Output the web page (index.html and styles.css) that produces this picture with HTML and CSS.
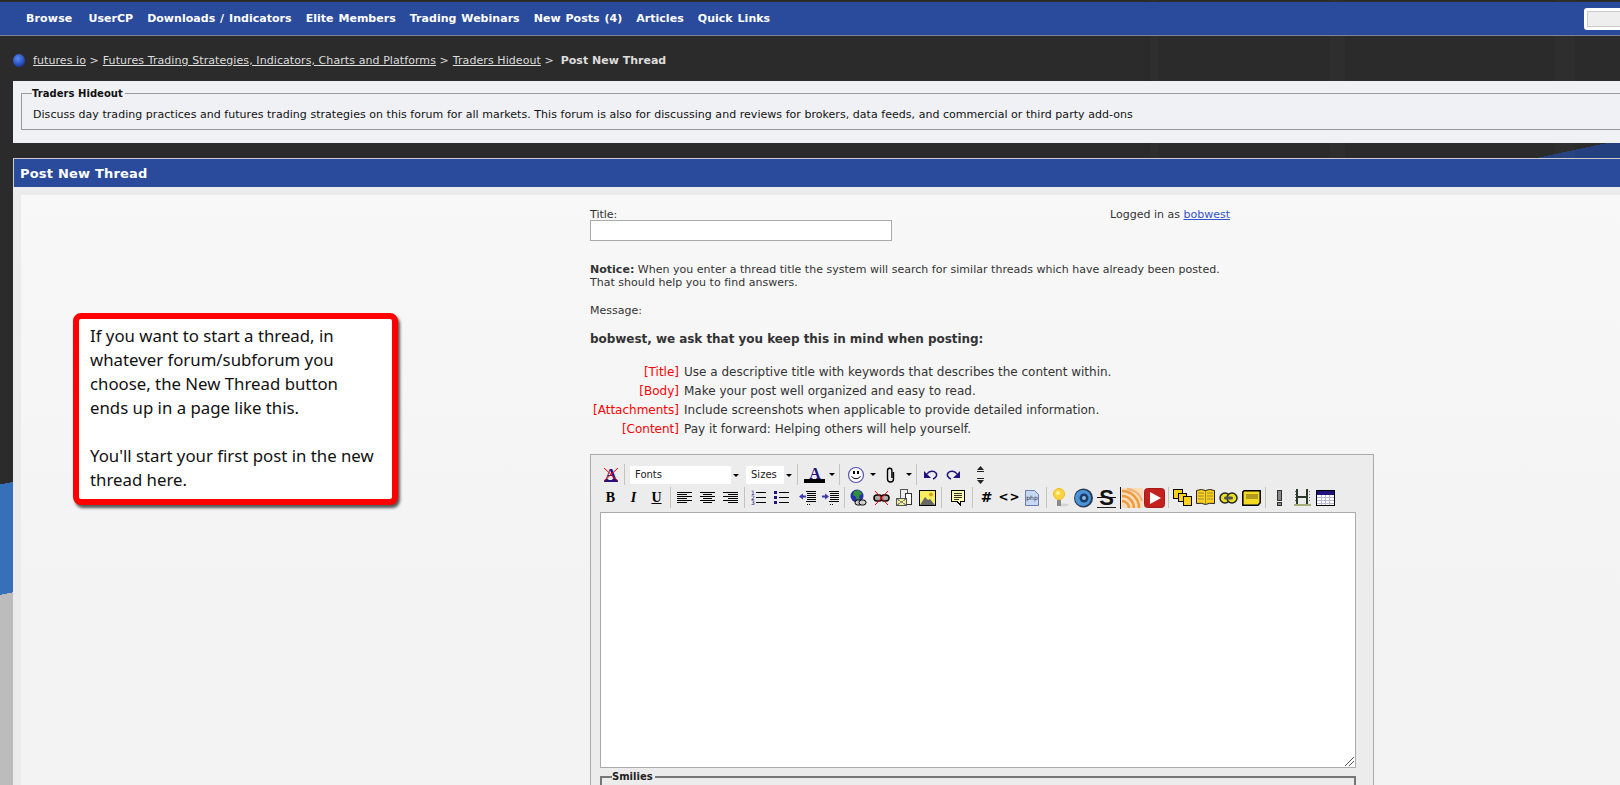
FILE: index.html
```html
<!DOCTYPE html>
<html>
<head>
  <meta charset="UTF-8">
  <title>Post New Thread</title>
  <link rel="stylesheet" href="styles.css">
</head>
<body>
  <div class="page">
    <nav class="top-nav">
      <a>Browse</a>
      <a>UserCP</a>
      <a>Downloads / Indicators</a>
      <a>Elite Members</a>
      <a>Trading Webinars</a>
      <a>New Posts (4)</a>
      <a>Articles</a>
      <a>Quick Links</a>
      <div class="search-box"><div class="search-field"></div></div>
    </nav>

    <div class="breadcrumb">
      <span class="globe-dot"></span>
      <a>futures io</a> <span class="crumb-sep">&gt;</span>
      <a>Futures Trading Strategies, Indicators, Charts and Platforms</a> <span class="crumb-sep">&gt;</span>
      <a>Traders Hideout</a> <span class="crumb-sep">&gt;</span>
      <strong>Post New Thread</strong>
    </div>

    <div class="forum-box">
      <fieldset class="forum-info">
        <legend>Traders Hideout</legend>
        <div>Discuss day trading practices and futures trading strategies on this forum for all markets. This forum is also for discussing and reviews for brokers, data feeds, and commercial or third party add-ons</div>
      </fieldset>
    </div>

    <div class="section-head">Post New Thread</div>

    <div class="section-body">
      <div class="section-inner">
        <div class="form-col">
          <div class="title-row">
            <div>
              <div>Title:</div>
              <div class="title-input"></div>
            </div>
            <div class="logged-in">Logged in as <a>bobwest</a></div>
          </div>

          <p class="notice"><b>Notice:</b> When you enter a thread title the system will search for similar threads which have already been posted.<br>That should help you to find answers.</p>
          <div class="message-label">Message:</div>
          <div class="keep-mind">bobwest, we ask that you keep this in mind when posting:</div>

          <div class="rules">
            <span class="rule-tag">[Title]</span><span>Use a descriptive title with keywords that describes the content within.</span>
            <span class="rule-tag">[Body]</span><span>Make your post well organized and easy to read.</span>
            <span class="rule-tag">[Attachments]</span><span>Include screenshots when applicable to provide detailed information.</span>
            <span class="rule-tag">[Content]</span><span>Pay it forward: Helping others will help yourself.</span>
          </div>

          <div class="editor">
            <!-- toolbar row 1 -->
            <div class="tb-row">
              <span class="tb-btn">
                <svg width="20" height="20" viewBox="0 0 20 20">
                  <text x="10" y="15" class="svg-serif" font-size="17" fill="#22127e" text-anchor="middle">A</text>
                  <rect x="3" y="15" width="14" height="2" fill="#22127e"/>
                  <path d="M3 3l14 13M17 3L3 16" stroke="#f00" fill="none"/>
                </svg>
              </span>
              <span class="tb-sep"></span>
              <div class="tb-select tb-fonts"><span>Fonts</span><i class="tb-select-arrow"></i></div>
              <div class="tb-select tb-sizes"><span>Sizes</span><i class="tb-select-arrow"></i></div>
              <span class="tb-sep"></span>
              <span class="tb-btn tb-color">
                <svg width="22" height="20" viewBox="0 0 22 20">
                  <text x="11" y="14" class="svg-serif" font-size="16" fill="#22127e" text-anchor="middle">A</text>
                  <rect x="0" y="14" width="21" height="4" fill="#000"/>
                </svg>
              </span>
              <i class="tb-arrow"></i>
              <span class="tb-sep"></span>
              <span class="tb-btn tb-smile">
                <svg width="18" height="18" viewBox="0 0 18 18">
                  <circle cx="9" cy="9" r="7.500" fill="#fff" stroke="#5a50b0" stroke-width="1.200"/>
                  <rect x="6" y="5" width="2" height="3" fill="#000"/>
                  <rect x="10" y="5" width="2" height="3" fill="#000"/>
                  <path d="M4.500 10.500q4.500 4.500 9 0" fill="none" stroke="#000"/>
                </svg>
              </span>
              <i class="tb-arrow"></i>
              <span class="tb-btn tb-clip">
                <svg width="11" height="16" viewBox="0 0 11 16">
                  <path d="M8.500 5v7a3 3 0 0 1-6 0V3.500a2.200 2.200 0 0 1 4.400 0V11" fill="none" stroke="#000" stroke-width="1.400"/>
                </svg>
              </span>
              <i class="tb-arrow"></i>
              <span class="tb-sep"></span>
              <span class="tb-btn">
                <svg width="15" height="12" viewBox="0 0 15 12">
                  <path d="M4 5C6 1.500 11 1.500 13 4 14.500 6 13 9 10 10" fill="none" stroke="#22127e" stroke-width="1.500"/>
                  <path d="M1 2v7h7z" fill="#22127e"/>
                </svg>
              </span>
              <span class="tb-btn">
                <svg width="15" height="12" viewBox="0 0 15 12">
                  <path d="M11 5C9 1.500 4 1.500 2 4 .5 6 2 9 5 10" fill="none" stroke="#22127e" stroke-width="1.500"/>
                  <path d="M14 2v7H7z" fill="#22127e"/>
                </svg>
              </span>
              <span class="tb-sizer">
                <svg width="7" height="18" viewBox="0 0 7 18">
                  <path d="M3.500 0L7 4H0z" fill="#222"/><rect x="0" y="5" width="7" height="1" fill="#222"/>
                  <rect x="0" y="12" width="7" height="1" fill="#222"/><path d="M3.500 18L7 14H0z" fill="#222"/>
                </svg>
              </span>
            </div>

            <!-- toolbar row 2 -->
            <div class="tb-row">
              <span class="tb-btn tb-letter"><b>B</b></span>
              <span class="tb-btn tb-letter"><b><i>I</i></b></span>
              <span class="tb-btn tb-letter tb-under"><b>U</b></span>
              <span class="tb-sep"></span>
              <span class="tb-btn">
                <svg width="15" height="12" viewBox="0 0 15 12" shape-rendering="crispEdges"><path d="M0 .5h15M0 2.500h10M0 4.500h15M0 6.500h10M0 8.500h15M0 10.500h10" stroke="#000"/></svg>
              </span>
              <span class="tb-btn">
                <svg width="15" height="12" viewBox="0 0 15 12" shape-rendering="crispEdges"><path d="M0 .5h15M3 2.500h9M0 4.500h15M3 6.500h9M0 8.500h15M3 10.500h9" stroke="#000"/></svg>
              </span>
              <span class="tb-btn">
                <svg width="15" height="12" viewBox="0 0 15 12" shape-rendering="crispEdges"><path d="M0 .5h15M5 2.500h10M0 4.500h15M5 6.500h10M0 8.500h15M5 10.500h10" stroke="#000"/></svg>
              </span>
              <span class="tb-sep"></span>
              <span class="tb-btn">
                <svg width="15" height="18" viewBox="0 0 15 18">
                  <text x="0" y="6" class="svg-tiny" fill="#22127e">1</text>
                  <text x="0" y="11" class="svg-tiny" fill="#22127e">2</text>
                  <text x="0" y="16" class="svg-tiny" fill="#22127e">3</text>
                  <path d="M5 3.500h10M5 8.500h10M5 13.500h10" stroke="#000" shape-rendering="crispEdges"/>
                </svg>
              </span>
              <span class="tb-btn">
                <svg width="15" height="14" viewBox="0 0 15 14" shape-rendering="crispEdges">
                  <rect x="0" y="0" width="3" height="3" fill="#22127e"/><rect x="0" y="5" width="3" height="3" fill="#22127e"/><rect x="0" y="10" width="3" height="3" fill="#22127e"/>
                  <path d="M5 1.500h10M5 6.500h10M5 11.500h10" stroke="#000"/>
                </svg>
              </span>
              <span class="tb-btn tb-gap">
                <svg width="17" height="14" viewBox="0 0 17 14" shape-rendering="crispEdges">
                  <path d="M7 .5h10M8 2.500h9M8 4.500h9M8 6.500h9M8 8.500h9M7 10.500h10M8 13.500h1M10 13.500h1" stroke="#000"/>
                  <path d="M0 5.500l4-3v2h3v2H4v2z" fill="#3a3ab0" shape-rendering="auto"/>
                </svg>
              </span>
              <span class="tb-btn">
                <svg width="17" height="14" viewBox="0 0 17 14" shape-rendering="crispEdges">
                  <path d="M7 .5h10M8 2.500h9M8 4.500h9M8 6.500h9M8 8.500h9M7 10.500h10M8 13.500h1M10 13.500h1" stroke="#000"/>
                  <path d="M7 5.500l-4-3v2H0v2h3v2z" fill="#3a3ab0" shape-rendering="auto"/>
                </svg>
              </span>
              <span class="tb-sep"></span>
              <span class="tb-btn">
                <svg width="17" height="18" viewBox="0 0 17 18">
                  <circle cx="7" cy="7" r="6.500" fill="#2530a8"/>
                  <path d="M4 2l5-1 3 4-3 2 1 4-3 1-1-4-3-2z" fill="#2f8f3a"/>
                  <rect x="5" y="11" width="7" height="5" rx="2.500" fill="#ccc" stroke="#000"/>
                  <rect x="9" y="11" width="7" height="5" rx="2.500" fill="#ccc" stroke="#000"/>
                </svg>
              </span>
              <span class="tb-btn">
                <svg width="17" height="16" viewBox="0 0 17 16">
                  <rect x="1" y="5" width="8" height="6" rx="3" fill="#aaa" stroke="#000" stroke-width="1.500"/>
                  <rect x="8" y="5" width="8" height="6" rx="3" fill="#aaa" stroke="#000" stroke-width="1.500"/>
                  <path d="M2 1l13 14M15 1L2 15" stroke="#f00" fill="none"/>
                </svg>
              </span>
              <span class="tb-btn">
                <svg width="17" height="18" viewBox="0 0 17 18" shape-rendering="crispEdges">
                  <rect x="4.500" y=".5" width="7" height="11" fill="#eee" stroke="#555"/>
                  <rect x="9.500" y="4.500" width="6" height="11" fill="#fff" stroke="#333"/>
                  <rect x=".5" y="9.500" width="10" height="7" fill="#f5f090" stroke="#555"/>
                  <path d="M1 10l9 6M10 10l-9 6" stroke="#888"/>
                </svg>
              </span>
              <span class="tb-btn">
                <svg width="17" height="16" viewBox="0 0 17 16">
                  <rect x=".5" y=".5" width="16" height="15" fill="#f5ef60" stroke="#000"/>
                  <circle cx="12" cy="4.500" r="2" fill="#d8a020"/>
                  <path d="M1 15l5-8 3 3 2-1 5 6z" fill="#666"/>
                </svg>
              </span>
              <span class="tb-sep"></span>
              <span class="tb-btn tb-gap">
                <svg width="15" height="16" viewBox="0 0 15 16" shape-rendering="crispEdges">
                  <path d="M.5.5h13v11H9v3l-3-3H.5z" fill="#ffffb0" stroke="#000"/>
                  <path d="M3 3.500h8M3 5.500h8M3 7.500h8M3 9.500h5" stroke="#333"/>
                </svg>
              </span>
              <span class="tb-sep"></span>
              <span class="tb-btn tb-hash">#</span>
              <span class="tb-btn tb-code">&lt;&gt;</span>
              <span class="tb-btn">
                <svg width="15" height="16" viewBox="0 0 15 16">
                  <path d="M.5.5h9l4 4v11H.5z" fill="#c6d8f2" stroke="#6a7fb5"/>
                  <text x="7" y="10" class="svg-tiny" text-anchor="middle" fill="#223">php</text>
                </svg>
              </span>
              <span class="tb-sep"></span>
              <span class="tb-btn">
                <svg width="19" height="20" viewBox="0 0 19 20">
                  <ellipse cx="12" cy="17" rx="6" ry="1.500" fill="#d4d4d4"/>
                  <circle cx="8" cy="6" r="5.500" fill="#fbd540" stroke="#f0b820"/>
                  <circle cx="7" cy="5" r="2" fill="#fff2a0"/>
                  <rect x="6" y="12" width="4" height="6" fill="#8a8a8a"/>
                </svg>
              </span>
              <span class="tb-btn">
                <svg width="21" height="20" viewBox="0 0 21 20">
                  <circle cx="10.500" cy="10" r="9.500" fill="#2a3a55"/>
                  <circle cx="10" cy="10" r="8" fill="#4c94d8"/>
                  <circle cx="11" cy="10" r="4.500" fill="#1c3c68"/>
                  <circle cx="11" cy="10" r="2" fill="#8ab8e0"/>
                </svg>
              </span>
              <span class="tb-btn tb-strike"><span>S</span></span>
              <span class="tb-btn tb-rss">
                <svg width="21" height="20" viewBox="0 0 21 20">
                  <rect width="21" height="20" fill="#fbdcb8"/>
                  <path d="M0 3a17 17 0 0 1 17 17M0 8a12 12 0 0 1 12 12M0 13a7 7 0 0 1 7 7" fill="none" stroke="#ef9a40" stroke-width="2.500"/>
                  <path d="M5 1a16 16 0 0 1 15 12" fill="none" stroke="#f4b070" stroke-width="2"/>
                </svg>
              </span>
              <span class="tb-btn">
                <svg width="21" height="20" viewBox="0 0 21 20">
                  <rect x=".5" y=".5" width="20" height="19" rx="3" fill="#c4201e" stroke="#a81a18"/>
                  <path d="M6 4l11 6-11 6z" fill="#fff"/>
                </svg>
              </span>
              <span class="tb-sep"></span>
              <span class="tb-btn">
                <svg width="19" height="18" viewBox="0 0 19 18" shape-rendering="crispEdges">
                  <rect x=".5" y=".5" width="9" height="9" fill="#fbd01c" stroke="#000"/>
                  <rect x="5.500" y="4.500" width="8" height="8" fill="#fbd01c" stroke="#000"/>
                  <rect x="10.500" y="7.500" width="8" height="9" fill="#fbd01c" stroke="#000"/>
                </svg>
              </span>
              <span class="tb-btn">
                <svg width="19" height="20" viewBox="0 0 19 20">
                  <path d="M.5 2.500q5-2 9 0 4-2 9 0v13q-5-1-9 1-4-2-9-1z" fill="#fbd01c" stroke="#222"/>
                  <path d="M9.500 2.500v14M2.500 5h5M2.500 8h5M2.500 11h5M11.500 5h5M11.500 8h5M11.500 11h5" stroke="#444" stroke-dasharray="1 1"/>
                </svg>
              </span>
              <span class="tb-btn">
                <svg width="19" height="12" viewBox="0 0 19 12">
                  <rect x="1" y="1" width="10" height="10" rx="5" fill="#e8e020" stroke="#222" stroke-width="1.500"/>
                  <rect x="8" y="1" width="10" height="10" rx="5" fill="#e8e020" stroke="#222" stroke-width="1.500"/>
                  <rect x="5" y="4.500" width="9" height="3" rx="1.500" fill="#555"/>
                </svg>
              </span>
              <span class="tb-btn">
                <svg width="19" height="16" viewBox="0 0 19 16">
                  <path d="M2 .8h16.200v12L16 15.200H.8V2z" fill="#f5d820" stroke="#000" stroke-width="1.500"/>
                  <rect x="4" y="4" width="12" height="5" fill="#b09a20"/>
                </svg>
              </span>
              <span class="tb-sep"></span>
              <span class="tb-btn">
                <svg width="5" height="16" viewBox="0 0 5 16" shape-rendering="crispEdges">
                  <rect x=".5" y=".5" width="4" height="10" fill="#888" stroke="#333"/>
                  <rect x=".5" y="12.500" width="4" height="3" fill="#888" stroke="#333"/>
                </svg>
              </span>
              <span class="tb-btn">
                <svg width="17" height="18" viewBox="0 0 17 18" shape-rendering="crispEdges">
                  <rect x="0" y="15" width="17" height="2" fill="#a6ad78"/>
                  <path d="M3 0v15M13 0v15M3 7.500h10" stroke="#2a3a2a" stroke-width="2"/>
                  <path d="M1 2h1M1 5h1M1 8h1M1 11h1M15 2h1M15 5h1M15 8h1M15 11h1" stroke="#667"/>
                </svg>
              </span>
              <span class="tb-btn">
                <svg width="19" height="16" viewBox="0 0 19 16" shape-rendering="crispEdges">
                  <rect x=".5" y=".5" width="18" height="15" fill="#fff" stroke="#000"/>
                  <rect x="1" y="1" width="17" height="4" fill="#22127e"/>
                  <path d="M1 7.500h17M1 10.500h17M1 13.500h17M5.500 5v10M9.500 5v10M13.500 5v10" stroke="#b8b8d8"/>
                </svg>
              </span>
            </div>

            <div class="editor-area">
              <svg class="resize-grip" width="9" height="9" viewBox="0 0 9 9"><path d="M0 9l9-9M4 9l5-5" stroke="#555" fill="none"/></svg>
            </div>

            <fieldset class="smilies">
              <legend>Smilies</legend>
            </fieldset>
          </div>
        </div>

        <!-- annotation drawn over the screenshot -->
        <div class="callout">If you want to start a thread, in<br>whatever forum/subforum you<br>choose, the New Thread button<br>ends up in a page like this.<br><br>You'll start your first post in the new<br>thread here.</div>
      </div>
    </div>
  </div>
</body>
</html>
```

FILE: styles.css
```css
* {
  box-sizing: border-box;
}

html, body {
  height: 100%;
  overflow: hidden;
}

body {
  margin: 0;
  font-family: "DejaVu Sans", Verdana, sans-serif;
  font-size: 11px;
  line-height: 13px;
  color: #333;
  background:
    linear-gradient(90deg, transparent 1150px, rgba(255, 255, 255, 0.015) 1150px, rgba(255, 255, 255, 0.015) 1158px, transparent 1158px, transparent 1330px, rgba(255, 255, 255, 0.015) 1330px, rgba(255, 255, 255, 0.015) 1345px, transparent 1345px, transparent 1555px, rgba(255, 255, 255, 0.015) 1555px, rgba(255, 255, 255, 0.015) 1575px, transparent 1575px),
    linear-gradient(168deg, #2b2b2b 474px, transparent 474px, transparent 582px, #bcbcbc 582px),
    linear-gradient(90deg, #3570b9 0, #24407f 1530px);
}

.page {
  width: 1660px;
  padding-top: 2px;
}

/* Top bar */
.top-nav {
  height: 34px;
  display: flex;
  align-items: center;
  gap: 14px;
  padding-left: 26px;
  background: #2a4a9b;
  border-bottom: 1px solid #7d8494;
}

.top-nav a {
  color: #fff;
  font-weight: bold;
  letter-spacing: 0.03px;
  word-spacing: 1px;
}

.top-nav a:first-child {
  margin-right: 2px;
  letter-spacing: 0.15px;
}

.search-box {
  margin-left: auto;
  width: 76px;
  height: 22px;
  padding: 3px;
  background: #fff;
  border-radius: 3px;
}

.search-field {
  height: 100%;
  background: #eee;
  border: 1px solid #ccc;
}

/* Breadcrumb */
.breadcrumb {
  height: 45px;
  padding: 3px 0 0 13px;
  display: flex;
  align-items: center;
  white-space: pre;
  color: #ddd;
  letter-spacing: 0.08px;
}

.breadcrumb a {
  text-decoration: underline;
}

.breadcrumb strong {
  margin-left: 3px;
  letter-spacing: 0;
}

.crumb-sep {
  margin: 0 4px 0 3.500px;
}

.globe-dot {
  width: 12px;
  height: 13px;
  margin-right: 8px;
  border-radius: 50%;
  background: radial-gradient(circle at 40% 35%, #5a8cf0, #1c3fb0 70%, #16276a);
}

/* Forum description */
.forum-box {
  margin-left: 13px;
  padding: 6px 0 13px 8px;
  background: #f0f1f5;
  color: #111;
  letter-spacing: 0.04px;
}

.forum-info {
  margin: 0;
  padding: 8px 10px 8px 11px;
  border: 1px solid #9a9a9a;
}

.forum-info legend {
  margin-left: -1px;
  padding: 0 2px 0 0;
  font-size: 10px;
  font-weight: bold;
}

/* Post New Thread */
.section-head {
  margin: 15px 0 0 13px;
  height: 29px;
  padding-left: 6px;
  background: #2a4a9b;
  border-top: 1px solid #ccc;
  border-left: 1px solid #ccc;
  color: #fff;
  font-size: 13px;
  font-weight: bold;
  line-height: 30px;
  letter-spacing: 0.2px;
}

.section-body {
  margin-left: 13px;
  padding: 8px 0 0 8px;
  height: 600px;
  background: #ebebeb;
}

.section-inner {
  position: relative;
  height: 100%;
  padding: 13px 0 0 569px;
  background: linear-gradient(#f8f8f8, #f3f3f3 400px);
}

.form-col {
  width: 784px;
}

.title-row {
  width: 640px;
  display: flex;
  justify-content: space-between;
}

.title-input {
  width: 302px;
  height: 21px;
  margin-top: -1px;
  background: #fff;
  border: 1px solid #aaa;
}

.notice {
  margin: 22px 0 0;
  letter-spacing: 0.02px;
}

.message-label {
  margin-top: 15px;
}

.keep-mind {
  margin-top: 14px;
  font-size: 12px;
  line-height: 16px;
  font-weight: bold;
  letter-spacing: -0.04px;
}

.rules {
  margin-top: 16px;
  display: grid;
  grid-template-columns: 89px 1fr;
  column-gap: 5px;
  grid-auto-rows: 19px;
  align-items: center;
  font-size: 12px;
}

.rule-tag {
  text-align: right;
  color: #f00;
  white-space: nowrap;
}

.logged-in a {
  color: #3355cc;
  text-decoration: underline;
}

/* Editor */
.editor {
  margin-top: 15px;
  padding: 8px 18px 0 9px;
  background: #ececec;
  border: 1px solid #aaa;
}

.tb-row {
  margin-left: -1px;
  height: 23px;
  display: flex;
  align-items: center;
}

.tb-btn {
  flex: none;
  width: 23px;
  height: 22px;
  display: flex;
  align-items: center;
  justify-content: center;
}

.tb-gap {
  margin-left: 3px;
}

.tb-sep {
  flex: none;
  width: 1px;
  height: 21px;
  margin: 0 2px;
  background: #c4c4bc;
}

.tb-select {
  flex: none;
  height: 18px;
  display: flex;
  align-items: center;
  justify-content: space-between;
  padding-left: 5px;
  background: #fff;
  font-size: 10px;
  color: #222;
}

.tb-fonts {
  width: 112px;
  margin: 0 4px 0 3px;
}

.tb-sizes {
  width: 49px;
}

.tb-select-arrow {
  width: 11px;
  height: 100%;
  background: #ececec;
  position: relative;
}

.tb-select-arrow::after,
.tb-arrow::after {
  content: '';
  border-top: 3px solid #000;
  border-left: 3px solid transparent;
  border-right: 3px solid transparent;
}

.tb-select-arrow::after {
  position: absolute;
  left: 2px;
  top: 8px;
}

.tb-arrow {
  flex: none;
  width: 11px;
  display: flex;
  justify-content: center;
}

.tb-color {
  margin-left: 3px;
}

.tb-smile {
  margin-left: 2px;
}

.tb-clip {
  width: 23px;
  margin: 0 1px;
}

.tb-sizer {
  margin-left: 12px;
  display: flex;
}

.tb-letter,
.tb-hash,
.tb-code {
  color: #000;
  font-weight: bold;
}

.tb-letter {
  font-family: "Liberation Serif", serif;
  font-size: 14px;
}

.tb-under b {
  text-decoration: underline;
}

.tb-hash {
  font-size: 14px;
}

.tb-code {
  font-size: 12px;
  letter-spacing: 1px;
}

.tb-strike span {
  position: relative;
  padding: 0 2px;
  font-family: "Liberation Sans", sans-serif;
  font-size: 22px;
  font-weight: bold;
  line-height: 19px;
  color: #111;
  border-bottom: 1px solid #222;
}

/* the strike runs wider than the letter */
.tb-strike span::after {
  content: '';
  position: absolute;
  left: 0;
  right: 0;
  top: 9px;
  height: 1px;
  background: #111;
}

.tb-rss {
  margin-left: 2px;
  border-left: 1px solid #111;
}

.svg-serif {
  font-family: "Liberation Serif", serif;
  font-weight: bold;
}

.svg-tiny {
  font-family: "DejaVu Sans", sans-serif;
  font-size: 6px;
}

.editor-area {
  position: relative;
  margin-top: 3px;
  width: 756px;
  height: 256px;
  background: #fff;
  border: 1px solid #aaa;
}

.resize-grip {
  position: absolute;
  right: 1px;
  bottom: 1px;
}

.smilies {
  margin: 2px 0 0;
  width: 756px;
  height: 40px;
  padding: 0 0 0 10px;
  border: 2px solid #777;
}

.smilies legend {
  padding: 0 2px 0 0;
  font-size: 10px;
  font-weight: bold;
  color: #222;
}

/* Red annotation box */
.callout {
  position: absolute;
  left: 52px;
  top: 118px;
  width: 325px;
  height: 192px;
  padding: 5px 0 0 11px;
  background: #fff;
  border: 6px solid #f00;
  border-radius: 8px;
  box-shadow: 2px 3px 3px rgba(0, 0, 0, 0.65);
  font-family: "Noto Sans", "Open Sans", sans-serif;
  font-size: 16.800px;
  line-height: 24px;
  color: #111;
  white-space: nowrap;
}
```
